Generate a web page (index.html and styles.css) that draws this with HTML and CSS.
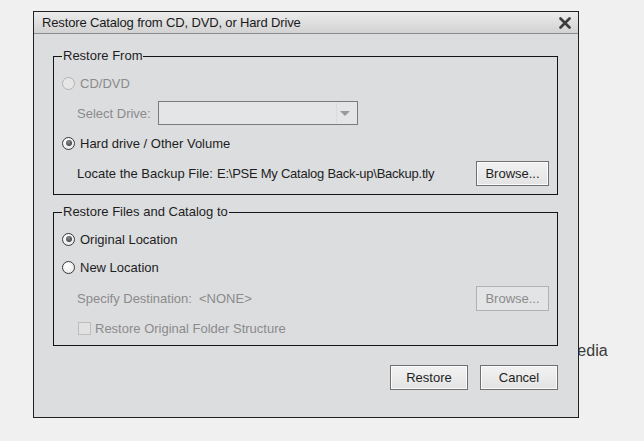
FILE: index.html
```html
<!DOCTYPE html>
<html>
<head>
<meta charset="utf-8">
<link rel="stylesheet" href="styles.css">
</head>
<body>
<div class="backdrop"><span class="bg-text">Media</span></div>
<div class="dialog">
  <div class="titlebar">
    <span class="title">Restore Catalog from CD, DVD, or Hard Drive</span>
    <svg class="close" width="12" height="12" viewBox="0 0 12 12"><path d="M1.5 1.5 L10.5 10.5 M10.5 1.5 L1.5 10.5" stroke="#3c3c3c" stroke-width="2.6" stroke-linecap="round"/></svg>
  </div>
  <div class="body">
    <fieldset class="group g1">
      <legend>Restore From</legend>
      <div class="row r30 disabled">
        <span class="radio off-disabled"></span><span class="label">CD/DVD</span>
      </div>
      <div class="row r30 indent disabled">
        <span class="field-label">Select Drive:</span>
        <span class="select"><span class="sep"></span><span class="arrow"></span></span>
      </div>
      <div class="row r30">
        <span class="radio checked"></span><span class="label">Hard drive / Other Volume</span>
      </div>
      <div class="row r30 indent">
        <span class="field-label locate">Locate the Backup File:</span>
        <span class="path tight">E:\PSE My Catalog Back-up\Backup.tly</span>
        <span class="btn browse">Browse...</span>
      </div>
    </fieldset>
    <fieldset class="group g2">
      <legend>Restore Files and Catalog to</legend>
      <div class="row ra">
        <span class="radio checked"></span><span class="label">Original Location</span>
      </div>
      <div class="row rb">
        <span class="radio"></span><span class="label">New Location</span>
      </div>
      <div class="row rc indent disabled">
        <span class="field-label dest">Specify Destination:</span>
        <span class="path">&lt;NONE&gt;</span>
        <span class="btn browse btn-disabled">Browse...</span>
      </div>
      <div class="row rd indent disabled">
        <span class="checkbox"></span><span class="label">Restore Original Folder Structure</span>
      </div>
    </fieldset>
    <div class="actions">
      <span class="btn action">Restore</span>
      <span class="btn action">Cancel</span>
    </div>
  </div>
</div>
</body>
</html>
```
FILE: styles.css
```css
html, body {
  margin: 0;
  padding: 0;
}
body {
  background: #f0f0f0;
  width: 644px;
  height: 441px;
  overflow: hidden;
  font-family: "Liberation Sans", Arial, sans-serif;
  font-size: 13px;
  color: #1e1e1e;
  position: relative;
}
.backdrop {
  height: 441px;
}
.bg-text {
  position: absolute;
  left: 564px;
  top: 342px;
  font-size: 16px;
  color: #3a3a3a;
}
.dialog {
  position: absolute;
  left: 33px;
  top: 11px;
  width: 544px;
  height: 405px;
  border: 1px solid #222;
  background: #dcdddf;
}
.titlebar {
  height: 21px;
  border-bottom: 1px solid #8c8c8c;
  background: linear-gradient(#ececec, #d2d2d2);
  display: flex;
  align-items: center;
  justify-content: space-between;
  padding: 0 7px 0 8px;
}
.title {
  color: #1a1a1a;
  line-height: 21px;
  letter-spacing: -0.15px;
}
.close {
  display: block;
}
.body {
  padding: 14px 20px 0 19px;
}
.group {
  margin: 0;
  border: 1px solid #141414;
  padding: 4px 8px 6px 8px;
  min-width: 0;
}
.group legend {
  padding: 0 1px;
  line-height: 16px;
  height: 16px;
  color: #1e1e1e;
}
.g2 {
  margin-top: 9px;
  padding-bottom: 4px;
}
.row {
  display: flex;
  align-items: center;
  white-space: nowrap;
}
.r30 { height: 30px; }
.ra { height: 30px; }
.rb { height: 26px; }
.rc { height: 36px; }
.rd { height: 25px; }
.indent {
  padding-left: 15px;
}
.disabled {
  color: #8b8b8b;
}
.radio {
  width: 11px;
  height: 11px;
  border-radius: 50%;
  border: 1px solid #3a3a3a;
  background: radial-gradient(circle at 40% 35%, #ffffff, #e4e4e4);
  position: relative;
  flex: none;
}
.radio.off-disabled {
  border-color: #b3b3b3;
  background: #e6e6e6;
}
.radio.checked::after {
  content: "";
  position: absolute;
  left: 2.5px;
  top: 2.5px;
  width: 6px;
  height: 6px;
  border-radius: 50%;
  background: radial-gradient(circle at 40% 35%, #8a8a8a, #2e2e2e);
}
.radio + .label {
  margin-left: 5px;
}
.field-label {
  width: 81px;
  flex: none;
}
.field-label.locate {
  width: 140px;
}
.field-label.dest {
  width: 122px;
}
.select {
  width: 198px;
  height: 22px;
  border: 1px solid #7a7a7a;
  background: #e4e5e6;
  position: relative;
  flex: none;
}
.select .sep {
  position: absolute;
  right: 20px;
  top: 1px;
  bottom: 1px;
  width: 1px;
  background: #dadada;
}
.select .arrow {
  position: absolute;
  right: 7px;
  top: 9px;
  width: 0;
  height: 0;
  border-left: 5px solid transparent;
  border-right: 5px solid transparent;
  border-top: 5px solid #9a9a9a;
}
.path {
  flex: 1;
}
.path.tight {
  letter-spacing: -0.25px;
}
.btn {
  display: flex;
  align-items: center;
  justify-content: center;
  box-sizing: border-box;
  border: 1px solid #707070;
  background: linear-gradient(#f2f2f2, #e3e3e3);
  box-shadow: inset 0 0 0 1px #fbfbfb;
  color: #1e1e1e;
  flex: none;
}
.browse {
  width: 73px;
  height: 25px;
}
.btn-disabled {
  border-color: #adb2b5;
  background: #e3e4e6;
  box-shadow: none;
  color: #8b8b8b;
}
.checkbox {
  width: 11px;
  height: 11px;
  border: 1px solid #bdbdbd;
  background: #e2e2e2;
  flex: none;
  margin-left: 1px;
  margin-right: 4px;
}
.actions {
  display: flex;
  justify-content: flex-end;
  gap: 12px;
  margin-top: 19px;
}
.action {
  width: 78px;
  height: 25px;
}
```
